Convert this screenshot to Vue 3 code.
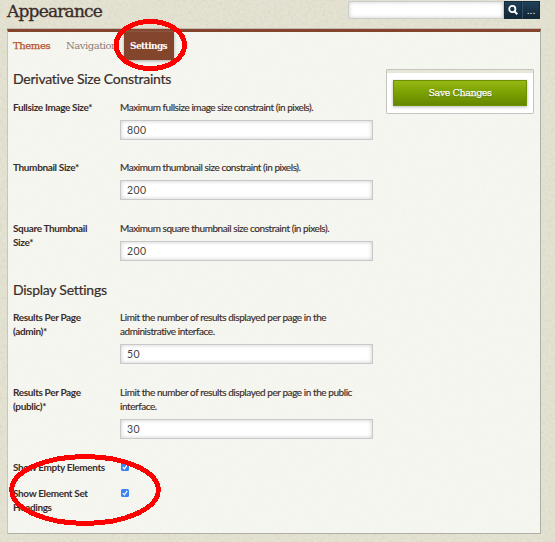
<script setup>
import { ref } from 'vue'

const tabs = [
  { label: 'Themes', kind: 'link' },
  { label: 'Navigation', kind: 'muted' },
  { label: 'Settings', kind: 'active' },
]

const sizes = ref([
  { label: ['Fullsize Image Size*'], help: ['Maximum fullsize image size constraint (in pixels).'], value: '800' },
  { label: ['Thumbnail Size*'], help: ['Maximum thumbnail size constraint (in pixels).'], value: '200' },
  { label: ['Square Thumbnail', 'Size*'], help: ['Maximum square thumbnail size constraint (in pixels).'], value: '200' },
])

const display = ref([
  { label: ['Results Per Page', '(admin)*'], help: ['Limit the number of results displayed per page in the', 'administrative interface.'], value: '50' },
  { label: ['Results Per Page', '(public)*'], help: ['Limit the number of results displayed per page in the public', 'interface.'], value: '30' },
])

const checks = [
  { label: ['Show Empty Elements'] },
  { label: ['Show Element Set', 'Headings'] },
]
</script>

<template>
  <div class="page">
    <svg class="grain" width="555" height="542" aria-hidden="true">
      <filter id="grain"><feTurbulence type="fractalNoise" baseFrequency="0.35" numOctaves="3" /><feColorMatrix values="0 0 0 0 0.45  0 0 0 0 0.42  0 0 0 0 0.3  0.9 0 0 0 -0.33" /></filter>
      <rect width="555" height="542" filter="url(#grain)" opacity="0.35" />
    </svg>
    <header class="top">
      <h1>Appearance</h1>
      <div class="search">
        <input class="query" type="text" />
        <button class="dark" type="button">
          <svg width="12" height="12" viewBox="0 0 12 12"><circle cx="5.3" cy="5" r="3.1" fill="none" stroke="#fff" stroke-width="1.8" /><path d="M7.5 7.4L10.3 10.3" stroke="#fff" stroke-width="2" /></svg>
        </button>
        <button class="dark more" type="button">...</button>
      </div>
    </header>
    <main class="panel">
      <nav>
        <a v-for="t in tabs" :key="t.label" :class="['tab', t.kind]">{{ t.label }}</a>
      </nav>
      <div class="columns">
        <section class="fields">
          <h2>Derivative Size Constraints</h2>
          <div v-for="f in sizes" :key="f.label[0]" class="field">
            <label><span v-for="l in f.label" :key="l">{{ l }}</span></label>
            <div class="control">
              <p><span v-for="l in f.help" :key="l">{{ l }}</span></p>
              <input v-model="f.value" class="box" type="text" />
            </div>
          </div>
          <h2 class="second">Display Settings</h2>
          <div v-for="f in display" :key="f.label[1]" class="field tall">
            <label><span v-for="l in f.label" :key="l">{{ l }}</span></label>
            <div class="control">
              <p><span v-for="l in f.help" :key="l">{{ l }}</span></p>
              <input v-model="f.value" class="box" type="text" />
            </div>
          </div>
          <div v-for="c in checks" :key="c.label[0]" class="field check">
            <label><span v-for="l in c.label" :key="l">{{ l }}</span></label>
            <svg class="tick" width="8" height="8" viewBox="0 0 8 8"><rect width="8" height="8" rx="1.5" fill="#3b82f3" /><path d="M1.8 4.2L3.4 5.9L6.2 1.9" fill="none" stroke="#fff" stroke-width="1.2" /></svg>
          </div>
        </section>
        <aside class="save"><button type="button">Save Changes</button></aside>
      </div>
    </main>
    <svg class="marks" width="555" height="542" fill="none" stroke="#f00" stroke-width="5" shape-rendering="crispEdges">
      <ellipse cx="150.3" cy="45" rx="34.3" ry="23.5" />
      <ellipse cx="85" cy="490" rx="73.3" ry="33.4" />
    </svg>
  </div>
</template>

<style>
body { margin: 0; overflow: hidden; }
</style>

<style scoped>
* { box-sizing: border-box; }
.page { position: relative; width: 555px; height: 542px; overflow: hidden; background: #e4e2d2; color: #3a2c2a; font: 10px/14px Lato, sans-serif; }
.grain, .marks { position: absolute; left: 0; top: 0; pointer-events: none; }
.marks { z-index: 3; }
.top { position: relative; display: flex; justify-content: space-between; height: 29px; padding: 0 15px 0 7px; }
h1 { margin: 0; font: 500 17px/23px "DejaVu Serif", serif; letter-spacing: -0.8px; -webkit-text-stroke: 0.35px #3a2c2a; }
.search { display: flex; height: 18px; margin-top: 1px; }
.query { width: 156px; height: 18px; border: 1px solid #ccc; background: #fff; box-shadow: inset 0 0 4px #ccc; padding: 0; }
.dark { display: grid; place-items: center; width: 18px; height: 18px; padding: 0; border: 1px solid #142a3a; background: linear-gradient(#20415a, #122635); color: #fff; }
.more { border-left-color: #35516a; font: 9px/10px "DejaVu Serif", serif; padding-top: 2px; }
.panel { position: relative; width: 534px; height: 505px; margin-left: 7px; border: 1px solid #aeb0a8; border-left-color: #c9c7b9; border-top: 3px solid #84452d; background: rgba(246, 248, 243, 0.88); box-shadow: 0 -1px 0 #c4bcae; }
nav { display: flex; height: 28px; padding-left: 5px; font: 10px/27px "DejaVu Serif", serif; }
.tab { height: 28px; line-height: 28px; }
.link { width: 53px; color: #b4532f; letter-spacing: -0.4px; -webkit-text-stroke: 0.25px #b4532f; }
.muted { width: 58px; color: #8d7b74; letter-spacing: -0.45px; }
.active { width: 50px; padding-left: 6px; background: #84452d; color: #fff; font-weight: 700; font-size: 9px; letter-spacing: -0.6px; box-shadow: 0 1px 3px #aaa; }
.columns { display: flex; }
.fields { width: 360px; margin-left: 5px; padding-top: 9px; }
h2 { margin: 0; height: 30.9px; font: 400 14px/20px Lato, sans-serif; letter-spacing: -0.25px; -webkit-text-stroke: 0.2px #3a2c2a; }
.field { display: flex; height: 60.5px; }
label { width: 107px; font-weight: 700; }
label span, p span { display: block; white-space: nowrap; }
label span { letter-spacing: -0.36px; }
p { margin: 0; letter-spacing: -0.44px; -webkit-text-stroke: 0.15px #3a2c2a; }
.box { display: block; width: 253px; height: 20px; margin-top: 6px; padding: 0 6px; border: 1px solid #c9c9c9; background: #fff; color: #444; font: 10.5px/18px Lato, sans-serif; letter-spacing: 0.35px; box-shadow: inset 0 0 4px #ccc; }
.second { height: 30px; margin-top: -1.4px; }
.tall { height: 75px; }
.check { height: 26px; }
.tick { margin: 3px 0 0 0.5px; }
.save { width: 148px; height: 45px; margin: 9px 0 0 13px; padding: 10px 6px 7px; border: 1px solid #c4c5be; border-radius: 1px; background: #fff; box-shadow: inset 0 3px #e8e6d8; }
.save button { width: 134px; height: 26px; padding: 0; border: 1px solid #6d8f05; background: linear-gradient(#96b813, #7ca303 45%, #668700); color: #fff; font: 9.5px/24px "DejaVu Serif", serif; letter-spacing: -0.4px; -webkit-text-stroke: 0.25px #fff; text-shadow: 0 1px 1px #456000; box-shadow: 0 1px 3px #bbb; }
</style>
